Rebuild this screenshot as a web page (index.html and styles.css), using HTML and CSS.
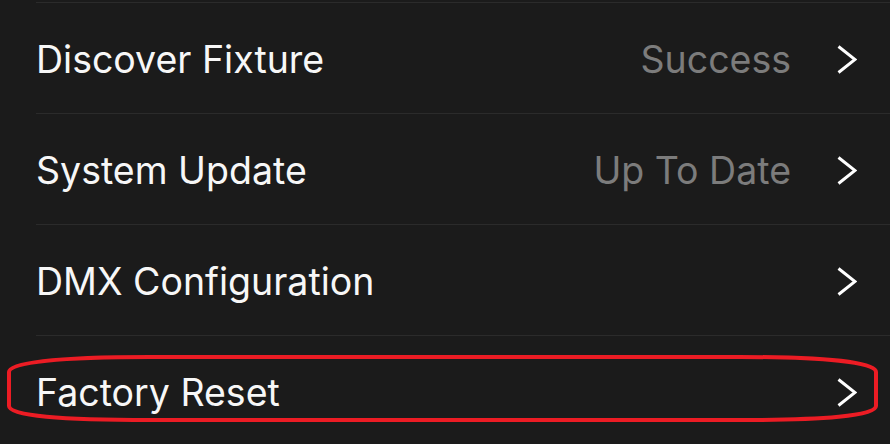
FILE: index.html
```html
<!DOCTYPE html>
<html lang="en">
<head>
<meta charset="utf-8">
<title>Settings</title>
<link rel="stylesheet" href="styles.css">
</head>
<body>
<div class="screen">
  <ul class="list">
    <li class="row">
      <span class="label">Discover Fixture</span>
      <span class="value">Success</span>
      <svg class="chev" width="20" height="29" viewBox="0 0 20 29"><polyline points="1.5,1.5 18,14.5 1.5,27.5" fill="none" stroke="#fff" stroke-width="3"/></svg>
    </li>
    <li class="row">
      <span class="label">System Update</span>
      <span class="value">Up To Date</span>
      <svg class="chev" width="20" height="29" viewBox="0 0 20 29"><polyline points="1.5,1.5 18,14.5 1.5,27.5" fill="none" stroke="#fff" stroke-width="3"/></svg>
    </li>
    <li class="row">
      <span class="label">DMX Configuration</span>
      <span class="value"></span>
      <svg class="chev" width="20" height="29" viewBox="0 0 20 29"><polyline points="1.5,1.5 18,14.5 1.5,27.5" fill="none" stroke="#fff" stroke-width="3"/></svg>
    </li>
    <li class="row">
      <span class="label">Factory Reset</span>
      <span class="value"></span>
      <svg class="chev" width="20" height="29" viewBox="0 0 20 29"><polyline points="1.5,1.5 18,14.5 1.5,27.5" fill="none" stroke="#fff" stroke-width="3"/></svg>
    </li>
  </ul>
  <svg class="highlight" width="890" height="444" viewBox="0 0 890 444">
    <path d="M150 357 L740 357 C822 357 876 362 876 372 L876 406 C876 416 822 420 740 420 L150 420 C62 420 9 416 9 406 L9 372 C9 362 62 357 150 357 Z" fill="none" stroke="#ec1c24" stroke-width="4"/>
  </svg>
</div>
</body>
</html>
```
FILE: styles.css
```css
html, body {
  margin: 0;
  padding: 0;
  background: #1b1b1b;
}
.screen {
  position: relative;
  width: 890px;
  height: 444px;
  overflow: hidden;
  background: #1b1b1b;
  font-family: "Inter", "Liberation Sans", sans-serif;
}
.list {
  list-style: none;
  margin: 2px 0 0 0;
  padding: 0;
}
.row {
  display: flex;
  align-items: center;
  height: 110px;
  margin-left: 36px;
  padding-right: 33px;
  border-top: 1px solid #2b2b2b;
}
.label {
  flex: 1;
  color: #f7f7f7;
  font-size: 37.5px;
  padding-top: 2px;
}
.value {
  color: #7c7c7c;
  font-size: 37.5px;
  margin-right: 46px;
  padding-top: 2px;
}
.chev {
  display: block;
  margin-top: 3px;
}
.highlight {
  position: absolute;
  left: 0;
  top: 0;
  pointer-events: none;
}
```
